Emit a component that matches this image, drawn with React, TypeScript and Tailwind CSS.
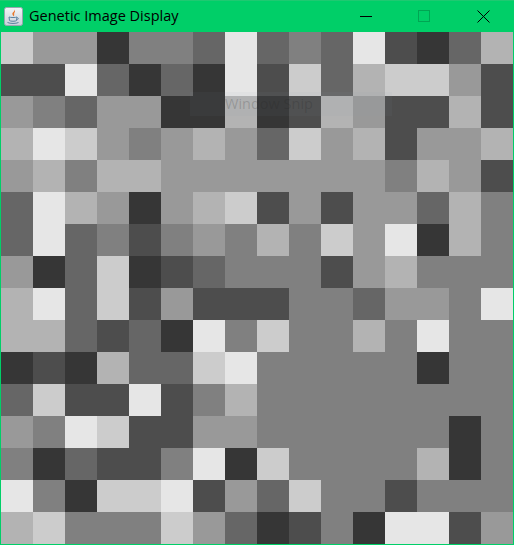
const shades = ["bg-[#363636]", "bg-[#4d4d4d]", "bg-[#666666]", "bg-[#808080]", "bg-[#999999]", "bg-[#b3b3b3]", "bg-[#cccccc]", "bg-[#e6e6e6]"];

const grid = [
    "6440332723271025".split(""),
    "1172020716256641".split(""),
    "4324400501541151".split(""),
    "5764345426451445".split(""),
    "4535544444443541".split(""),
    "2754045614144253".split(""),
    "2723134353647053".split(""),
    "4026012333145333".split(""),
    "5726141113324437".split(""),
    "5521207363353733".split(""),
    "0105226733333033".split(""),
    "2611713533333333".split(""),
    "4376114433333303".split(""),
    "3021137063333503".split(""),
    "7306671426331333".split(""),
    "5633364201307714".split(""),
];

function JavaIcon() {
    return (
        <svg width="19" height="19" viewBox="0 0 19 19" className="shrink-0">
            <defs>
                <linearGradient id="plate" x1="0" y1="0" x2="0" y2="1">
                    <stop offset="0" stopColor="#f2f4f6" />
                    <stop offset="1" stopColor="#c8d0da" />
                </linearGradient>
            </defs>
            <rect x="0.5" y="0.5" width="18" height="18" rx="2" fill="url(#plate)" stroke="#9aa5b0" />
            <path d="M10 2.5 C11.5 4.5 7.5 5.5 8.5 7.5 C9 8.5 9.5 9 9.5 9.5 C11 8 9.5 7 10.5 5.5 C11 4.7 11.5 4 10 2.5 Z" fill="#e8762b" />
            <path d="M5 10 C6.5 10.7 11.5 10.7 13 10 L12.5 13.5 C12 14.5 6 14.5 5.5 13.5 Z" fill="none" stroke="#5b82a0" strokeWidth="1" />
            <path d="M13 10.8 C15 10.5 15 12.5 12.5 12.9" fill="none" stroke="#5b82a0" strokeWidth="0.8" />
            <path d="M3.5 15.5 C6.5 16.8 11.5 16.8 14.5 15.5" fill="none" stroke="#5b82a0" strokeWidth="1" />
        </svg>
    );
}

function TitleBar() {
    return (
        <div className="h-[31px] flex items-center pl-[4px] border-t border-t-[#1fc971]">
            <JavaIcon />
            <span className="ml-[6px] text-[14.5px] text-black font-['Open_Sans',sans-serif]">Genetic Image Display</span>
            <div className="ml-auto flex items-center">
                <div className="w-[46px] h-[30px] flex items-center justify-center">
                    <div className="w-[12px] h-px bg-black" />
                </div>
                <div className="w-[46px] ml-[12px] h-[30px] flex items-center justify-center">
                    <div className="w-[12px] h-[12px] border border-[#00a653]" />
                </div>
                <div className="w-[46px] ml-[13px] mr-[8px] h-[30px] flex items-center justify-center">
                    <svg width="13" height="13" viewBox="0 0 13 13">
                        <path d="M0.5 0.5 L12.5 12.5 M12.5 0.5 L0.5 12.5" stroke="#000" strokeWidth="1" fill="none" />
                    </svg>
                </div>
            </div>
        </div>
    );
}

export default function App() {
    return (
        <div className="relative w-[514px] h-[545px] bg-[#00cf68] overflow-hidden">
            <TitleBar />
            <div className="ml-px mt-px w-[512px] grid grid-cols-[repeat(16,32px)] grid-rows-[repeat(16,32px)]">
                {grid.flatMap((row, y) =>
                    row.map((v, x) => <div key={`${y}-${x}`} className={shades[Number(v)]} />)
                )}
            </div>
            {/* snip tool hint sitting over the window */}
            <div className="absolute left-[190px] top-[92px] w-[202px] h-[24px] bg-[#8a9aa8]/[0.06] flex items-center pl-[35px]">
                <span className="text-[14.5px] text-[#222222]/20 font-['Open_Sans',sans-serif]">Window Snip</span>
            </div>
        </div>
    );
}
